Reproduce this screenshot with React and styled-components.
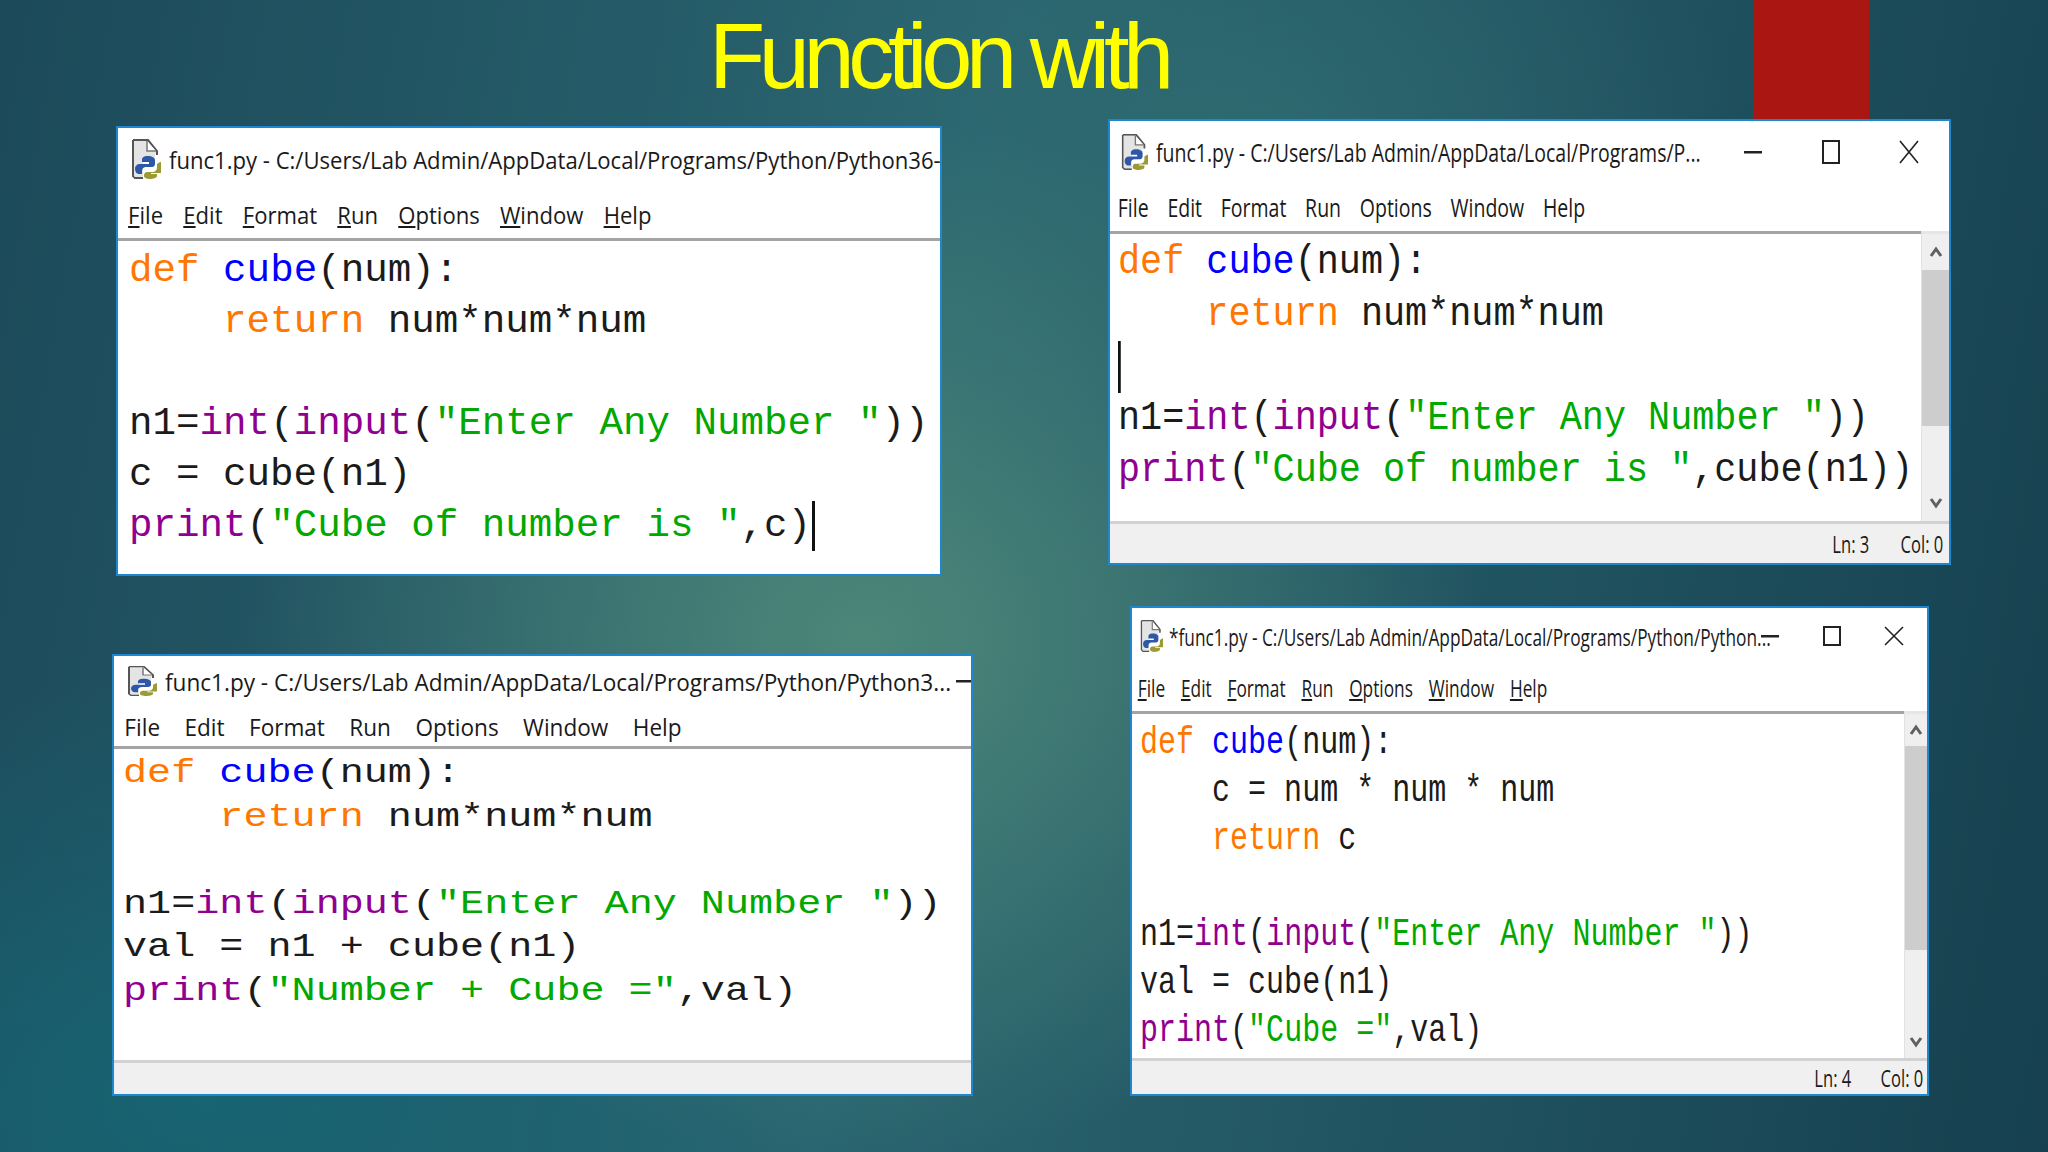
import React from "react";
import styled, { createGlobalStyle } from "styled-components";

const GlobalStyle = createGlobalStyle`
  html, body { margin: 0; padding: 0; background: #174353; }
`;

const Slide = styled.div`
  position: relative;
  width: 2048px;
  height: 1152px;
  overflow: hidden;
  background:
    radial-gradient(ellipse 620px 520px at 860px 640px, rgba(88, 146, 124, 0.75), rgba(88, 146, 124, 0) 100%),
    radial-gradient(ellipse 500px 300px at 1240px 130px, rgba(50, 110, 115, 0.7), rgba(50, 110, 115, 0) 100%),
    radial-gradient(ellipse 700px 420px at 200px 1100px, rgba(20, 105, 120, 0.75), rgba(20, 105, 120, 0) 100%),
    linear-gradient(100deg, #1c4a5a 0%, #2a6570 45%, #16404f 100%);
`;

const Title = styled.h1`
  margin: 0;
  padding: 3px 0 0 709px;
  font-family: "Liberation Sans", Arial, sans-serif;
  font-weight: 400;
  font-size: 92px;
  line-height: 106px;
  letter-spacing: -6.4px;
  color: #ffff00;
  white-space: nowrap;
`;

const RedBar = styled.div`
  position: absolute;
  left: 1754px;
  top: 0;
  width: 115px;
  height: 120px;
  background: #aa1612;
`;

const Win = styled.section`
  position: absolute;
  left: ${(p) => p.$x}px;
  top: ${(p) => p.$y}px;
  width: ${(p) => p.$w}px;
  height: ${(p) => p.$h}px;
  box-sizing: border-box;
  display: flex;
  flex-direction: column;
  overflow: hidden;
  background: #fff;
  border: 2px solid #1d87cf;
`;

const TitleBar = styled.div`
  flex: none;
  height: ${(p) => p.$h}px;
  display: flex;
  align-items: center;
  padding-left: ${(p) => p.$pad}px;
  gap: ${(p) => p.$gap}px;
  overflow: hidden;
`;

const TitleText = styled.div`
  flex: 1;
  min-width: 0;
  font-family: "Open Sans", "Noto Sans", sans-serif;
  font-size: ${(p) => p.$fs}px;
  color: #1a1a1a;
  white-space: nowrap;
  transform: scaleX(${(p) => p.$sx});
  transform-origin: left center;
`;

const Controls = styled.div`
  flex: none;
  display: flex;
  margin-right: ${(p) => p.$mr}px;
`;

const CtrlBtn = styled.div`
  width: ${(p) => p.$w}px;
  height: 36px;
  display: flex;
  align-items: center;
  justify-content: center;
  color: #1a1a1a;
`;

const MenuBar = styled.nav`
  flex: none;
  height: ${(p) => p.$h}px;
  display: flex;
  align-items: center;
  padding-left: ${(p) => p.$pad}px;
  gap: ${(p) => p.$gap}px;
  font-family: "Open Sans", "Noto Sans", sans-serif;
  font-size: ${(p) => p.$fs}px;
  color: #1a1a1a;
  transform: scaleX(${(p) => p.$sx});
  transform-origin: left center;
`;

const MenuItem = styled.span`
  &::first-letter {
    text-decoration: ${(p) => (p.$under ? "underline" : "none")};
  }
`;

const Body = styled.div`
  flex: 1;
  min-height: 0;
  display: flex;
  background: #f0f0f0;
`;

const Editor = styled.div`
  flex: 1;
  min-width: 0;
  background: #fff;
  border-top: 3px solid #a4a4a4;
  padding: ${(p) => p.$top}px 0 0 ${(p) => p.$pad}px;
  overflow: hidden;
`;

const Code = styled.pre`
  margin: 0;
  font-family: "Liberation Mono", "Courier New", monospace;
  font-size: ${(p) => p.$fs}px;
  line-height: ${(p) => p.$lh}px;
  color: #1b1b1b;
  transform: scaleX(${(p) => p.$sx});
  transform-origin: left top;
`;

const CodeLine = styled.div`
  height: ${(p) => p.$lh}px;
`;

const Tok = styled.span`
  color: ${(p) => p.$c};
`;

const Caret = styled.span`
  display: inline-block;
  width: 3px;
  height: 50px;
  margin-left: 1px;
  vertical-align: middle;
  background: #111;
`;

const Scrollbar = styled.div`
  flex: none;
  width: ${(p) => p.$w}px;
  display: flex;
  flex-direction: column;
  align-items: center;
  background: #efeff0;
  border-left: 1px solid #e2e2e2;
  border-top: 3px solid #e6e6e6;
`;

const ScrollBtn = styled.div`
  flex: none;
  height: ${(p) => p.$h}px;
  display: flex;
  align-items: center;
  justify-content: center;
  color: #606060;
`;

const Thumb = styled.div`
  flex: none;
  align-self: stretch;
  height: ${(p) => p.$h}px;
  background: #cdcdcd;
`;

const StatusBar = styled.div`
  flex: none;
  height: ${(p) => p.$h}px;
  box-sizing: border-box;
  display: flex;
  justify-content: flex-end;
  align-items: center;
  gap: ${(p) => p.$gap}px;
  padding-right: ${(p) => p.$pad}px;
  background: #f0f0f0;
  border-top: 3px solid #d2d2d2;
  font-family: "Open Sans", "Noto Sans", sans-serif;
  font-size: 23px;
  color: #1a1a1a;
`;

const StatusText = styled.span`
  display: inline-block;
  transform: scaleX(0.72);
  transform-origin: right center;
`;

const C = { kw: "#ff7700", fn: "#0000ff", bi: "#900090", st: "#00a800" };

const K = ({ children }) => <Tok $c={C.kw}>{children}</Tok>;
const F = ({ children }) => <Tok $c={C.fn}>{children}</Tok>;
const B = ({ children }) => <Tok $c={C.bi}>{children}</Tok>;
const S = ({ children }) => <Tok $c={C.st}>{children}</Tok>;

const defLine = <><K>def</K> <F>cube</F>(num):</>;
const inputLine = <>n1=<B>int</B>(<B>input</B>(<S>"Enter Any Number "</S>))</>;

const PyIcon = ({ w, h }) => (
  <svg width={w} height={h} viewBox="0 0 30 40" preserveAspectRatio="none" style={{ flex: "none" }}>
    <path d="M2 1h15l9 11v4M2 1v36l2 2h8" fill="#e6e6e6" stroke="#555" strokeWidth="2" />
    <path d="M3 2h13l8 10v8H12v18H4l-1-1z" fill="#e4e4e4" />
    <path d="M16 2v10h9" fill="#fff" stroke="#777" strokeWidth="1.5" />
    <path d="M17 17c-5 0-6 2-6 4v2h7v2h-9c-3 0-5 2-5 5s2 5 4 5h3v-3c0-3 2-4 4-4h6c2 0 3-2 3-3v-4c0-2-3-4-7-4z" fill="#2f57a8" />
    <path d="M26 25v4c0 2-2 4-4 4h-6c-2 0-3 2-3 3v1c0 2 3 3 6 3s7-1 7-3v-2h-6v-1h9c2 0 4-3 4-6s-2-5-4-5z" fill="#9c9a35" />
  </svg>
);

const CtrlIcons = ({ btn, mr, h = 36 }) => (
  <Controls $mr={mr}>
    <CtrlBtn $w={btn}>
      <svg width="18" height="3"><rect width="18" height="2.5" fill="#222" /></svg>
    </CtrlBtn>
    <CtrlBtn $w={btn}>
      <svg width="18" height={h - 12}><rect x="1" y="1" width="16" height={h - 14} fill="none" stroke="#222" strokeWidth="2" /></svg>
    </CtrlBtn>
    <CtrlBtn $w={btn}>
      <svg width="20" height={h - 12}><path d={`M1 1L19 ${h - 13}M19 1L1 ${h - 13}`} stroke="#222" strokeWidth="1.6" /></svg>
    </CtrlBtn>
  </Controls>
);

const Chevron = ({ up }) => (
  <svg width="14" height="12" viewBox="0 0 14 12">
    <path d={up ? "M2 10L7 3l5 7" : "M2 2l5 7 5-7"} fill="none" stroke="currentColor" strokeWidth="3" />
  </svg>
);

const MENU = ["File", "Edit", "Format", "Run", "Options", "Window", "Help"];

const IdleWindow = ({ box, t, m, code, icon, title, lines, ctrl, scroll, status, under }) => (
  <Win $x={box[0]} $y={box[1]} $w={box[2]} $h={box[3]}>
    <TitleBar $h={t.h} $pad={t.pad} $gap={t.gap}>
      <PyIcon w={icon[0]} h={icon[1]} />
      <TitleText $fs={t.fs} $sx={t.sx}>{title}</TitleText>
      {ctrl && <CtrlIcons btn={ctrl.btn} mr={ctrl.mr} h={ctrl.h} />}
    </TitleBar>
    <MenuBar $h={m.h} $pad={m.pad} $gap={m.gap} $fs={m.fs} $sx={m.sx}>
      {MENU.map((item) => (
        <MenuItem key={item} $under={under}>{item}</MenuItem>
      ))}
    </MenuBar>
    <Body>
      <Editor $top={code.top} $pad={code.pad}>
        <Code $fs={code.fs} $lh={code.lh} $sx={code.sx}>
          {lines.map((line, i) => (
            <CodeLine key={i} $lh={code.lh}>{line}</CodeLine>
          ))}
        </Code>
      </Editor>
      {scroll && (
        <Scrollbar $w={scroll.w}>
          <ScrollBtn $h={scroll.top}><Chevron up /></ScrollBtn>
          <Thumb $h={scroll.thumb} />
          <div style={{ flex: 1 }} />
          <ScrollBtn $h={scroll.top}><Chevron /></ScrollBtn>
        </Scrollbar>
      )}
    </Body>
    {status && (
      <StatusBar $h={status.h} $gap={status.gap} $pad={status.pad}>
        {status.text && <StatusText>{status.text[0]}</StatusText>}
        {status.text && <StatusText>{status.text[1]}</StatusText>}
      </StatusBar>
    )}
  </Win>
);

export default function App() {
  return (
    <Slide>
      <GlobalStyle />
      <Title>Function with</Title>
      <RedBar />

      <IdleWindow
        box={[116, 126, 826, 450]}
        t={{ h: 62, pad: 13, gap: 8, fs: 24, sx: 0.92 }}
        m={{ h: 48, pad: 11, gap: 22, fs: 24, sx: 0.92 }}
        code={{ top: 4, pad: 11, fs: 39.2, lh: 51, sx: 1 }}
        icon={[30, 40]}
        title="func1.py - C:/Users/Lab Admin/AppData/Local/Programs/Python/Python36-32/"
        under
        lines={[
          defLine,
          <>    <K>return</K> num*num*num</>,
          " ",
          inputLine,
          "c = cube(n1)",
          <><B>print</B>(<S>"Cube of number is "</S>,c)<Caret /></>,
        ]}
      />

      <IdleWindow
        box={[1108, 119, 843, 446]}
        t={{ h: 62, pad: 11, gap: 8, fs: 25, sx: 0.78 }}
        m={{ h: 48, pad: 10, gap: 24, fs: 25, sx: 0.78 }}
        code={{ top: 3, pad: 8, fs: 40, lh: 52, sx: 0.92 }}
        icon={[27, 36]}
        title="func1.py - C:/Users/Lab Admin/AppData/Local/Programs/P..."
        ctrl={{ btn: 78, mr: 1, h: 36 }}
        scroll={{ w: 27, top: 36, thumb: 156 }}
        status={{ h: 42, gap: 14, pad: 6, text: ["Ln: 3", "Col: 0"] }}
        lines={[
          defLine,
          <>    <K>return</K> num*num*num</>,
          <Caret style={{ marginLeft: 0, height: 52 }} />,
          inputLine,
          <><B>print</B>(<S>"Cube of number is "</S>,cube(n1))</>,
        ]}
      />

      <IdleWindow
        box={[112, 654, 861, 442]}
        t={{ h: 50, pad: 13, gap: 8, fs: 24, sx: 0.94 }}
        m={{ h: 40, pad: 11, gap: 26, fs: 24, sx: 0.94 }}
        code={{ top: 3, pad: 9, fs: 34, lh: 43.5, sx: 1.18 }}
        icon={[30, 30]}
        title="func1.py - C:/Users/Lab Admin/AppData/Local/Programs/Python/Python3..."
        ctrl={{ btn: 78, mr: -189, h: 36 }}
        status={{ h: 34, gap: 0, pad: 0 }}
        lines={[
          defLine,
          <>    <K>return</K> num*num*num</>,
          " ",
          inputLine,
          "val = n1 + cube(n1)",
          <><B>print</B>(<S>"Number + Cube ="</S>,val)</>,
        ]}
      />

      <IdleWindow
        box={[1130, 606, 799, 490]}
        t={{ h: 56, pad: 8, gap: 6, fs: 24, sx: 0.72 }}
        m={{ h: 47, pad: 8, gap: 22, fs: 24, sx: 0.72 }}
        code={{ top: 5, pad: 8, fs: 38, lh: 48, sx: 0.79 }}
        icon={[23, 32]}
        title="*func1.py - C:/Users/Lab Admin/AppData/Local/Programs/Python/Python..."
        ctrl={{ btn: 62, mr: 2, h: 32 }}
        scroll={{ w: 22, top: 32, thumb: 204 }}
        status={{ h: 36, gap: 12, pad: 4, text: ["Ln: 4", "Col: 0"] }}
        under
        lines={[
          defLine,
          "    c = num * num * num",
          <>    <K>return</K> c</>,
          " ",
          inputLine,
          "val = cube(n1)",
          <><B>print</B>(<S>"Cube ="</S>,val)</>,
        ]}
      />
    </Slide>
  );
}
